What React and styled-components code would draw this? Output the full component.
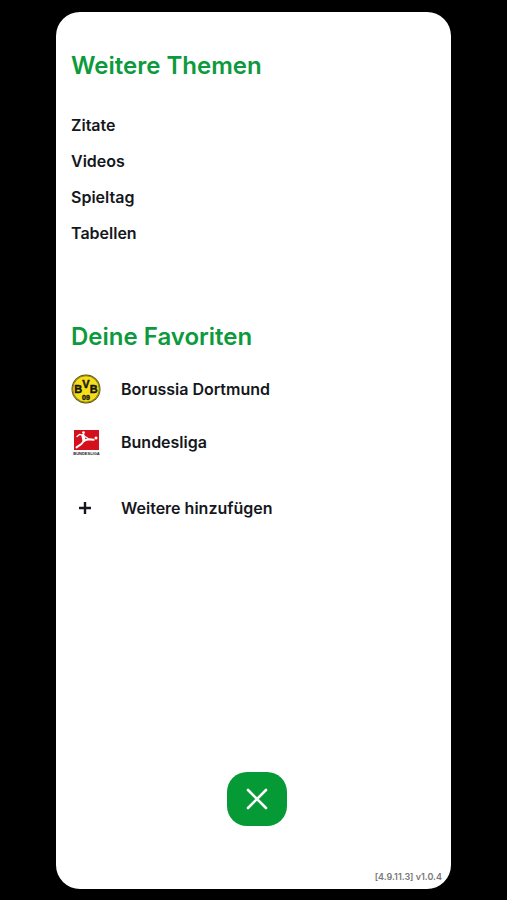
import React from 'react';
import styled, { createGlobalStyle } from 'styled-components';

const GlobalStyle = createGlobalStyle`
	* {
		box-sizing: border-box;
	}

	body {
		margin: 0;
		background: #000;
		color: #14171c;
		font-family: Inter, 'Noto Sans', sans-serif;
	}

	ul {
		list-style: none;
		margin: 0;
		padding: 0;
	}
`;

const Screen = styled.div`
	display: flex;
	min-height: 100vh;
	padding: 12px 56px 11px;
`;

const Menu = styled.main`
	flex: 1;
	display: flex;
	flex-direction: column;
	padding: 38px 9px 3px 15px;
	background: #fff;
	border-radius: 24px;
`;

const Section = styled.section`
	margin-bottom: ${props => props.$gap || 0}px;
`;

const Title = styled.h2`
	margin: 0;
	color: #0c9a3c;
	font-size: 24px;
	font-weight: 600;
	line-height: 32px;
`;

const TopicList = styled.ul`
	padding-top: 25px;
`;

const TopicLink = styled.a`
	display: block;
	color: inherit;
	font-size: 16px;
	font-weight: 600;
	line-height: 36px;
	text-decoration: none;
`;

const FavoriteList = styled.ul`
	padding: 9px 0 13px;
`;

const FavoriteLink = styled.a`
	display: flex;
	align-items: center;
	gap: 20px;
	height: 53px;
	color: inherit;
	font-size: 16px;
	font-weight: 600;
	text-decoration: none;
`;

const AddButton = styled.button`
	display: flex;
	align-items: center;
	gap: 20px;
	height: 53px;
	padding: 0;
	border: 0;
	background: none;
	color: inherit;
	font: inherit;
	font-size: 16px;
	font-weight: 600;
	cursor: pointer;
`;

const CloseButton = styled.button`
	display: flex;
	align-items: center;
	justify-content: center;
	align-self: center;
	width: 60px;
	height: 54px;
	margin: auto 0 42px;
	padding: 0;
	border: 0;
	border-radius: 20px;
	background: #059a35;
	color: #fff;
	cursor: pointer;
`;

const Version = styled.footer`
	align-self: flex-end;
	color: #777;
	font-size: 9px;
	font-weight: 600;
	line-height: 18px;
`;

const BvbLogo = () => (
	<svg width="30" height="30" viewBox="0 0 30 30" aria-hidden="true">
		<circle cx="15" cy="15" r="14.5" fill="#5a5210" />
		<circle cx="15" cy="15" r="13.6" fill="#f5de1b" />
		<circle cx="15" cy="15" r="13.2" fill="none" stroke="#554d10" strokeWidth="0.6" />
		<g
			fill="#17150c"
			stroke="#17150c"
			strokeWidth="0.4"
			fontFamily="Liberation Sans, sans-serif"
			fontWeight="700"
			textAnchor="middle"
		>
			<text x="7.3" y="19" fontSize="11">B</text>
			<text x="15" y="14" fontSize="11">V</text>
			<text x="22.7" y="19" fontSize="11">B</text>
			<text x="15" y="26" fontSize="7">09</text>
		</g>
	</svg>
);

const BundesligaLogo = () => (
	<svg width="30" height="30" viewBox="0 0 30 30" aria-hidden="true">
		<rect x="3" y="3" width="25" height="20" fill="#d3101c" />
		<g fill="none" stroke="#fff" strokeLinecap="round" strokeLinejoin="round">
			<path d="M6 9.6 8.5 7.4 13 8.4" strokeWidth="1.3" />
			<path d="M12 8.7 13 13.5" strokeWidth="3.2" />
			<path d="M14 9.5 17 11.5" strokeWidth="1.3" />
			<path d="M13.5 13.4 18 12.2 22.5 12.8" strokeWidth="2" />
			<path d="M12.8 14 10.4 17 5.5 20.4" strokeWidth="1.9" />
		</g>
		<circle cx="12.5" cy="5.6" r="1.4" fill="#fff" />
		<circle cx="25" cy="11" r="1.5" fill="#fff" />
		<text
			x="15.5"
			y="28"
			fill="#222"
			fontFamily="Liberation Sans, sans-serif"
			fontSize="4"
			fontWeight="700"
			textAnchor="middle"
		>
			BUNDESLIGA
		</text>
	</svg>
);

const PlusIcon = () => (
	<svg width="30" height="30" viewBox="0 0 30 30" aria-hidden="true">
		<path d="M14 9v12M8 15h12" stroke="#14171c" strokeWidth="2.4" />
	</svg>
);

const CloseIcon = () => (
	<svg width="24" height="24" viewBox="0 0 24 24" aria-hidden="true">
		<path d="m3 3 18 18M21 3 3 21" stroke="currentColor" strokeWidth="2.6" strokeLinecap="round" />
	</svg>
);

const topics = ['Zitate', 'Videos', 'Spieltag', 'Tabellen'];

const favorites = [
	{ name: 'Borussia Dortmund', Logo: BvbLogo },
	{ name: 'Bundesliga', Logo: BundesligaLogo }
];

const App = () => (
	<>
		<GlobalStyle />
		<Screen>
			<Menu>
				<Section $gap={70}>
					<Title>Weitere Themen</Title>
					<TopicList>
						{topics.map(topic => (
							<li key={topic}>
								<TopicLink href={`#${topic.toLowerCase()}`}>{topic}</TopicLink>
							</li>
						))}
					</TopicList>
				</Section>
				<Section>
					<Title>Deine Favoriten</Title>
					<FavoriteList>
						{favorites.map(({ name, Logo }) => (
							<li key={name}>
								<FavoriteLink href="#favoriten">
									<Logo />
									{name}
								</FavoriteLink>
							</li>
						))}
					</FavoriteList>
					<AddButton type="button">
						<PlusIcon />
						Weitere hinzufügen
					</AddButton>
				</Section>
				<CloseButton type="button" aria-label="Menü schließen">
					<CloseIcon />
				</CloseButton>
				<Version>[4.9.11.3] v1.0.4</Version>
			</Menu>
		</Screen>
	</>
);

export default App;
